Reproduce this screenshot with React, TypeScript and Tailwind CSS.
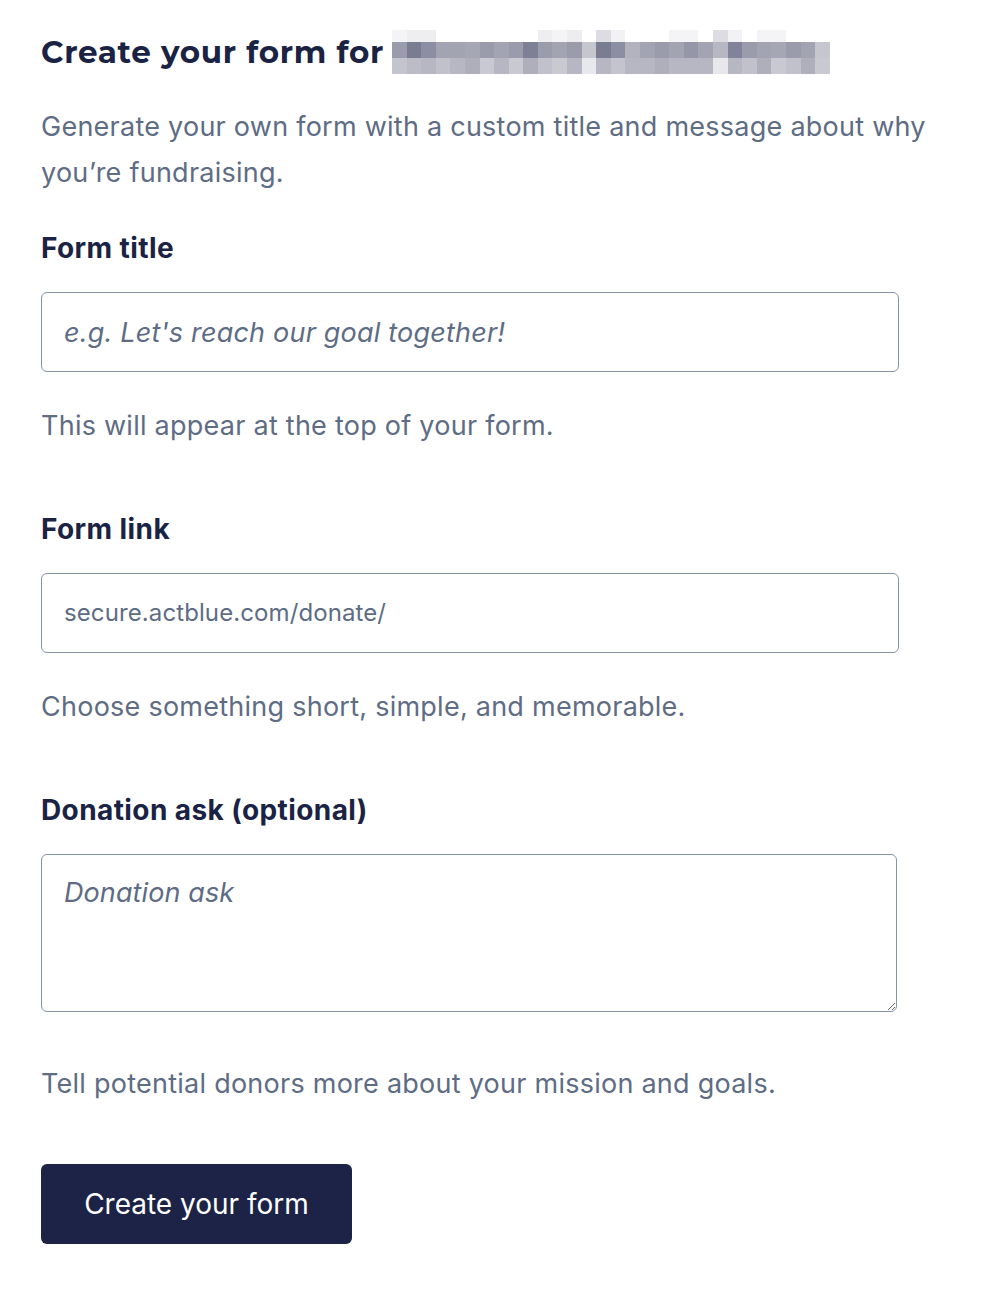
const BLUR_TOP = ["#f4f4f6", "#eeeef1", "#eeeef1", "#fff", "#fff", "#fff", "#fff", "#fff", "#fff", "#fff", "#eeeef1", "#f4f4f6", "#ededf0", "#fff", "#dcdce2", "#f2f2f4", "#fff", "#fff", "#fff", "#f4f4f6", "#f4f4f6", "#fff", "#dcdce2", "#f2f2f4", "#fff", "#f4f4f6", "#f4f4f6", "#fff", "#fff", "#fff"]
const BLUR_MID = ["#9a9cac", "#7a7d92", "#8c8fa1", "#a2a4b2", "#a2a4b2", "#a5a7b4", "#9a9cac", "#a2a4b2", "#9a9cac", "#7e8195", "#9a9cac", "#a2a4b2", "#9a9cac", "#c5c6ce", "#7a7d92", "#8c8fa1", "#b2b3bf", "#a2a4b2", "#9a9cac", "#a2a4b2", "#9597a8", "#a2a4b2", "#b6b7c2", "#80839a", "#9a9cac", "#a2a4b2", "#a5a7b4", "#9a9cac", "#a2a4b2", "#c5c6ce"]
const BLUR_BOT = ["#c3c4cd", "#bbbcc6", "#b6b7c2", "#c0c1ca", "#b6b7c2", "#aeafbb", "#c8c9d1", "#b6b7c2", "#c8c9d1", "#aeafbb", "#c0c1ca", "#c8c9d1", "#b6b7c2", "#e8e8ec", "#b6b7c2", "#c3c4cd", "#b6b7c2", "#b6b7c2", "#aeafbb", "#b6b7c2", "#b6b7c2", "#b6b7c2", "#e8e8ec", "#b6b7c2", "#c0c1ca", "#aeafbb", "#c8c9d1", "#c0c1ca", "#aeafbb", "#c8c9d1"]

// pixelated stand-in for the redacted committee name
function Blurred() {
  return (
    <span className="ml-[8px] inline-flex flex-col">
      {[BLUR_TOP, BLUR_MID, BLUR_BOT].map((row, r) => (
        <span key={r} className={`flex ${r === 0 ? "h-[12px]" : "h-[16px]"}`}>
          {row.map((c, i) => (
            <span key={i} className="w-[14.6px] h-full" style={{ backgroundColor: c }} />
          ))}
        </span>
      ))}
    </span>
  )
}

export default function App() {
  const labelCls = "text-[28px] leading-[36px] font-bold text-[#1b2345] tracking-[0.4px]"
  const helpCls = "text-[27px] leading-[36px] tracking-[0.25px] text-[#5e6c84]"
  const inputCls =
    "block w-[858px] h-[80px] rounded-[6px] border border-[#8593a8] px-[22px] text-[#5e6c84] outline-none bg-white"

  return (
    <div className="min-h-screen bg-white font-['Inter','Liberation_Sans',sans-serif] pl-[41px] pt-[30px] pb-[40px]">
      <h1 className="flex items-center text-[31px] leading-[44px] font-bold text-[#1b2345] tracking-[0.7px] font-['Montserrat','Inter',sans-serif]">
        Create your form for
        <Blurred />
      </h1>

      <p className="mt-[30px] w-[900px] text-[27px] leading-[46px] tracking-[0.25px] text-[#5e6c84]">
        Generate your own form with a custom title and message about why you’re fundraising.
      </p>

      <label className={`block mt-[34px] ${labelCls}`}>Form title</label>
      <input
        className={`mt-[26px] ${inputCls} text-[27px] tracking-[0.2px] italic placeholder:text-[#5e6c84]`}
        placeholder="e.g. Let's reach our goal together!"
      />
      <p className={`mt-[36px] ${helpCls}`}>This will appear at the top of your form.</p>

      <label className={`block mt-[67px] ${labelCls}`}>Form link</label>
      <div className={`mt-[26px] ${inputCls} flex items-center text-[24px] tracking-[0.1px]`}>secure.actblue.com/donate/</div>
      <p className={`mt-[36px] ${helpCls}`}>Choose something short, simple, and memorable.</p>

      <label className={`block mt-[67px] ${labelCls}`}>Donation ask (optional)</label>
      <textarea
        className="mt-[26px] block w-[856px] h-[158px] rounded-[6px] border border-[#8593a8] px-[22px] pt-[20px] text-[27px] leading-[36px] tracking-[0.1px] italic text-[#5e6c84] placeholder:text-[#5e6c84] outline-none resize-y"
        placeholder="Donation ask"
      />
      <p className={`mt-[54px] ${helpCls}`}>Tell potential donors more about your mission and goals.</p>

      <button className="mt-[62px] h-[80px] w-[311px] rounded-[6px] bg-[#1c2346] text-white text-[28px]">
        Create your form
      </button>
    </div>
  )
}
